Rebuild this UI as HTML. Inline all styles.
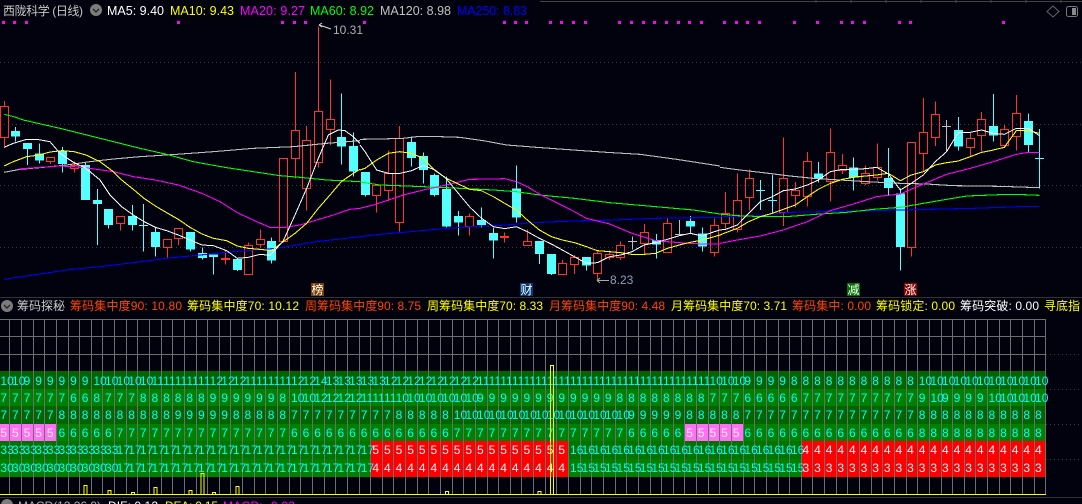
<!DOCTYPE html>
<html><head><meta charset="utf-8"><style>
html,body{margin:0;padding:0;background:#02020e;width:1082px;height:504px;overflow:hidden}
svg{position:absolute;left:0;top:0}
text{font-family:"Liberation Sans","Noto Sans CJK SC",sans-serif;font-size:12px}
.r{position:absolute;left:.4px;width:1082px;display:flex;font:12px/17px "Liberation Sans",sans-serif;color:#0ff}
.r i,.r b{flex:0 0 11.64px;width:11.64px;min-width:0;font-style:normal;font-weight:normal;white-space:nowrap;overflow:visible}
.r b{color:#ffeef4}
.m{font-size:12.5px}
</style></head><body>
<svg width="1082" height="504" viewBox="0 0 1082 504">
<rect width="1082" height="504" fill="#02020e"/>
<path d="M540 1.5H1082M816 0v3M851 0v3M886 0v3M921 0v3M956 0v3M991 0v3M1026 0v3M1061 0v3" stroke="#444" fill="none"/>
<path d="M0 62.5H1082M0 124.5H1082M0 185.5H1082M0 247.5H1082M1046 354.5H1082M1046 389.5H1082M1046 424.5H1082M1046 459.5H1082" stroke="#3c3c3c" stroke-dasharray="1 3" fill="none"/>
<path d="M0 297.5H1082M0 497.5H1082" stroke="#333" fill="none"/>

<!-- header -->
<text x="3" y="15" fill="#c8c8c8" textLength="80">西陇科学 (日线)</text>
<circle cx="96" cy="10" r="6" fill="#7c7c7c"/><path d="M93 9l3 3 3-3" stroke="#222" fill="none" stroke-width="1.3"/>
<text class="m" x="107" y="15" fill="#fff" textLength="57">MA5: 9.40</text>
<text class="m" x="170" y="15" fill="#ff0" textLength="64">MA10: 9.43</text>
<text class="m" x="240" y="15" fill="#f0f" textLength="65">MA20: 9.27</text>
<text class="m" x="310" y="15" fill="#0f0" textLength="64">MA60: 8.92</text>
<text class="m" x="380" y="15" fill="#c0c0c0" textLength="71">MA120: 8.98</text>
<text class="m" x="457" y="15" fill="#00f" textLength="70">MA250: 8.83</text>
<path d="M1053 6l6 5.500-6 5.500-6-5.500z" stroke="#666" fill="none"/>
<rect x="1066.500" y="6.500" width="11" height="10" rx="2" stroke="#777" fill="none"/><rect x="1072" y="8" width="4" height="7" fill="#888"/>

<!-- magenta dots -->
<path fill="#f0f" d="M2 21h3v3h-3zM13 21h3v3h-3zM25 21h3v3h-3zM177 21h3v3h-3zM281 21h3v3h-3zM293 21h3v3h-3zM304 21h3v3h-3zM363 21h3v3h-3zM503 21h3v3h-3zM514 21h3v3h-3zM525 21h3v3h-3zM549 21h3v3h-3zM560 21h3v3h-3zM572 21h3v3h-3zM584 21h3v3h-3zM618 21h3v3h-3zM630 21h3v3h-3zM642 21h3v3h-3zM653 21h3v3h-3zM665 21h3v3h-3zM677 21h3v3h-3zM688 21h3v3h-3zM700 21h3v3h-3zM723 21h3v3h-3zM735 21h3v3h-3zM746 21h3v3h-3zM758 21h3v3h-3zM793 21h3v3h-3zM816 21h3v3h-3zM840 21h3v3h-3zM851 21h3v3h-3zM863 21h3v3h-3zM898 21h3v3h-3zM909 21h3v3h-3zM1002 21h3v3h-3z"/>

<!-- cyan candles -->
<path stroke="#54ffff" fill="none" d="M15.500 127V141.500M27.500 143V165M39.500 143.500V163.500M62.500 147V172.500M85.500 162.500V200M97.500 189V245M108.500 209V228.500M132.500 205V230.500M143.500 204V251.500M155.500 227V256.500M190.500 232V251.500M202.500 247.500V259.500M213.500 254.500V274.500M237.500 259V271M271.500 237.500V263.500M341.500 93.500V164.500M353.500 132.500V176.500M365.500 172V196.500M411.500 136.500V166.500M423.500 152.500V183.500M434.500 173.500V196.500M446.500 176.500V227.500M458.500 211V235.500M481.500 207.500V227.500M493.500 227.500V258.500M516.500 165.500V222.500M539.500 241V264M551.500 254V275M586.500 257V270.500M656.500 234V258.500M690.500 216V233.500M702.500 227.500V251.500M760.500 180V210M772.500 175V214.500M818.500 162V182.500M853.500 157.500V190.500M888.500 148V195M900.500 188.500V270.500M958.500 117V150.500M993.500 94V141.500M1028.500 113.500V152M1039.500 129V188.500M139 225.500h9M756 190.500h9M768 200.500h9M1035 158.500h9"/>
<path fill="#54ffff" d="M11 131h9V136.500h-9zM23 143h9V149h-9zM35 153.500h9V160.500h-9zM58 150.500h9V164h-9zM81 165h9V200h-9zM93 200h9V204h-9zM104 209h9V225h-9zM128 216h9V225h-9zM151 232h9V247h-9zM186 232h9V249.500h-9zM198 253h9V258h-9zM209 254.500h9V257h-9zM233 259h9V270h-9zM267 241h9V260.500h-9zM337 137h9V146.500h-9zM349 146h9V171.500h-9zM361 172h9V195h-9zM407 142h9V158h-9zM419 156h9V170h-9zM430 175h9V195h-9zM442 189h9V226.500h-9zM454 216h9V222.500h-9zM477 220h9V225h-9zM489 233h9V240.500h-9zM512 188.500h9V217.500h-9zM535 241h9V254h-9zM547 254h9V274h-9zM582 257h9V265.500h-9zM652 240h9V244.500h-9zM686 221h9V226.500h-9zM698 233.500h9V246.500h-9zM814 173.500h9V178.500h-9zM849 167.500h9V177.500h-9zM884 178h9V188h-9zM896 193.500h9V247h-9zM954 130h9V146.500h-9zM989 126h9V135.500h-9zM1024 121h9V145h-9z"/>
<!-- gray dojis -->
<path stroke="#c0c0c0" fill="none" d="M632.500 236.500V249.500M628 241.500h9M679.500 220V234.500M675 234.500h9M946.500 120V151.500M942 126.500h9"/>
<!-- red candles -->
<path stroke="#ff3232" fill="none" d="M4.500 101V106.500M.5 106.500h8V137.500h-8zM4.500 137.500V146M46.500 157.500h8V161.500h-8zM50.500 161.500V164M74.500 161.500V165.500M70.500 165.500h8V168.500h-8zM74.500 168.500V172.500M116.500 216.500h8V223.500h-8zM120.500 223.500V230.500M163.500 239.500h8V247.500h-8zM167.500 247.500V257.500M174.500 228.500h8V238.500h-8zM178.500 238.500V245M225.500 250.500V264.500M221.500 258.500h8V259.500h-8zM248.500 242.500V245.500M244.500 245.500h8V274.500h-8zM260.500 229.500V239.500M256.500 239.500h8V244.500h-8zM260.500 244.500V247.500M279.500 158.500h8V241.500h-8zM295.500 72V130.500M291.500 130.500h8V158.500h-8zM295.500 158.500V178.500M306.500 126V140.500M302.500 140.500h8V188.500h-8zM306.500 188.500V210.500M318.500 26.500V111.500M314.500 111.500h8V162.500h-8zM318.500 162.500V167.500M330.500 79.500V119.500M326.500 119.500h8V129.500h-8zM330.500 129.500V145M372.500 185.500h8V195.500h-8zM376.500 195.500V212.500M388.500 150.500V173.500M384.500 173.500h8V190.500h-8zM388.500 190.500V201M399.500 126V138.500M395.500 138.500h8V222.500h-8zM399.500 222.500V231.500M469.500 213.500V216.500M465.500 216.500h8V226.500h-8zM469.500 226.500V235.500M504.500 232.500V242.500M500.500 236.500h8V237.500h-8zM527.500 229.500V241.500M523.500 241.500h8V245.500h-8zM562.500 260V263.500M558.500 263.500h8V274.500h-8zM574.500 255V257.500M570.500 257.500h8V264.500h-8zM574.500 264.500V274M597.500 250V253.500M593.500 253.500h8V273.500h-8zM597.500 273.500V279.500M609.500 250.500V254.500M605.500 254.500h8V257.500h-8zM609.500 257.500V260M620.500 241.500V245.500M616.500 245.500h8V257.500h-8zM620.500 257.500V260M644.500 224V232.500M640.500 232.500h8V243.500h-8zM644.500 243.500V254M667.500 218.500V223.500M663.500 223.500h8V252.500h-8zM714.500 218.500V225.500M710.500 225.500h8V252.500h-8zM714.500 252.500V256.500M725.500 192V213.500M721.500 213.500h8V223.500h-8zM725.500 223.500V229M737.500 173.500V200.500M733.500 200.500h8V229.500h-8zM737.500 229.500V232.500M749.500 169.500V178.500M745.500 178.500h8V197.500h-8zM749.500 197.500V210.500M783.500 137.500V178.500M779.500 178.500h8V212.500h-8zM783.500 212.500V226M795.500 182V190.500M791.500 190.500h8V195.500h-8zM795.500 195.500V207.500M807.500 152V161.500M803.500 161.500h8V196.500h-8zM807.500 196.500V206.500M830.500 128.500V152.500M826.500 152.500h8V181.500h-8zM830.500 181.500V201.500M842.500 154V165.500M838.500 165.500h8V170.500h-8zM842.500 170.500V174M865.500 165.500V173.500M861.500 173.500h8V183.500h-8zM865.500 183.500V185M877.500 143.500V167.500M873.500 167.500h8V177.500h-8zM877.500 177.500V180.500M907.500 142.500h8V247.500h-8zM911.500 247.500V256.500M923.500 98V132.500M919.500 132.500h8V153.500h-8zM923.500 153.500V171.500M935.500 101.500V114.500M931.500 114.500h8V137.500h-8zM935.500 137.500V146M970.500 133V138.500M966.500 138.500h8V147.500h-8zM970.500 147.500V156.500M981.500 112V119.500M977.500 119.500h8V135.500h-8zM981.500 135.500V151.500M1004.500 125V129.500M1000.500 129.500h8V145.500h-8zM1004.500 145.500V148M1016.500 95V113.500M1012.500 113.500h8V136.500h-8zM1016.500 136.500V150.500"/>

<!-- moving averages -->
<g fill="none" stroke-width="3.200" shape-rendering="crispEdges">
<g transform="translate(0,120) scale(.33333)">
<polyline stroke="#00f" points="12,478 100,465 200,450 300,440 400,428 500,415 600,405 700,395 830,385 950,365 1080,350"/>
<polyline stroke="#c0c0c0" points="12,157 60,148 130,142 200,135 270,125 340,117 420,110 530,103 640,95 760,85 880,80 980,70 1080,62"/>
<polyline stroke="#0f0" points="13,-17 45,-9 70,0 180,25 260,45 340,65 420,85 500,103 580,125 680,143 760,155 840,167 900,172 980,180 1080,185"/>
<polyline stroke="#f0f" points="55,147 120,142 180,138 222,140 270,145 340,155 400,170 466,180 535,195 606,220 660,245 712,278 770,305 810,322 850,323 900,315 950,300 1000,285 1050,268 1080,265"/>
<polyline stroke="#ff0" points="12,138 40,125 80,110 118,105 150,96 187,92 222,95 258,105 300,125 340,155 365,180 400,208 432,235 466,258 500,278 535,298 570,322 606,342 640,355 680,362 712,378 745,385 780,388 815,392 850,365 885,340 920,310 955,265 990,225 1024,185 1060,160 1080,148"/>
<polyline stroke="#fff" stroke-width="3" points="12,82 40,70 80,58 110,58 150,65 180,100 222,128 258,145 300,180 330,225 365,260 400,285 432,305 466,322 500,332 535,345 570,360 606,375 640,377 680,392 712,415 745,412 780,403 810,406 830,385 850,362 885,285 920,205 955,115 985,45 1015,30 1035,32 1060,50 1080,70"/>
</g>
<g transform="translate(360,120) scale(.33333)">
<polyline stroke="#00f" points="0,350 60,343 130,337 230,328 330,320 440,315 520,308 640,303 760,300 880,295 1080,292"/>
<polyline stroke="#c0c0c0" points="0,58 60,57 130,55 170,50 240,50 300,52 370,62 440,75 530,82 640,90 740,97 840,103 950,118 1080,138"/>
<polyline stroke="#0f0" points="0,186 60,195 140,198 260,203 400,210 469,215 538,225 643,235 749,248 887,260 1000,270 1080,282"/>
<polyline stroke="#f0f" points="0,265 40,255 85,240 130,225 190,210 259,195 329,178 400,177 434,176 469,185 502,200 538,222 574,240 643,275 679,295 749,312 816,340 887,362 958,368 1027,372 1080,372"/>
<polyline stroke="#ff0" points="0,150 15,145 50,120 85,100 119,95 154,100 190,115 223,150 259,175 295,192 329,208 364,212 400,230 434,250 469,270 502,300 538,330 574,350 607,360 643,368 679,380 712,392 749,395 782,398 816,403 852,403 887,400 922,385 958,375 991,367 1027,360 1063,350 1080,345"/>
<polyline stroke="#fff" stroke-width="3" points="0,75 15,95 50,150 85,160 120,160 155,152 190,136 225,150 258,175 295,220 330,262 365,295 400,320 434,326 469,320 502,335 538,355 574,372 607,390 643,410 679,430 712,428 749,410 782,405 816,395 852,375 887,368 922,358 958,347 991,340 1027,348 1063,335 1080,330"/>
</g>
<g transform="translate(720,120) scale(.33333)">
<polyline stroke="#00f" points="0,290 100,288 210,277 310,275 450,272 630,268 760,265 900,260 958,260"/>
<polyline stroke="#c0c0c0" points="0,142 60,150 130,158 210,168 280,175 360,180 440,185 541,190 620,192 700,197 840,199 958,203"/>
<polyline stroke="#0f0" points="0,282 50,287 105,289 210,289 300,282 380,277 460,268 541,262 610,250 680,238 741,228 840,224 910,224 958,226"/>
<polyline stroke="#f0f" points="0,370 52,360 121,348 190,330 262,305 331,272 400,252 470,230 541,222 610,192 680,163 751,145 820,125 889,103 925,97 958,97"/>
<polyline stroke="#ff0" points="0,345 17,338 52,325 86,305 121,290 157,280 190,268 226,255 262,230 295,208 331,190 367,178 400,172 436,168 470,165 505,160 541,182 574,165 610,155 646,135 680,128 715,123 751,110 785,97 820,90 853,82 889,32 925,32 958,40"/>
<polyline stroke="#fff" stroke-width="3" points="0,330 17,328 52,315 86,280 121,245 157,230 190,212 226,207 262,195 295,180 331,155 367,148 400,148 436,146 470,142 505,162 541,210 574,190 610,165 646,125 680,95 715,37 751,37 785,30 820,40 853,43 889,25 925,25 958,47"/>
</g>
</g>

<!-- price labels -->
<path d="M331 29l-12-4m0 0l3-2m-3 2l3 2" stroke="#ddd" fill="none"/>
<text x="333" y="34" fill="#b0b0b0" font-size="12">10.31</text>
<path d="M609 280.500H597m0 0l3-2.500m-3 2.500l3 2.500" stroke="#aaa" fill="none"/>
<text x="610" y="284" fill="#8fa0b4">8.23</text>

<!-- chips -->
<rect x="311" y="283" width="13" height="13" fill="#7a3f00"/><text x="311.500" y="294" fill="#fff">榜</text>
<rect x="520" y="283" width="13" height="13" fill="#003a78"/><text x="520.500" y="294" fill="#fff">财</text>
<rect x="847" y="283" width="13" height="13" fill="#007000"/><text x="847.500" y="294" fill="#fff">减</text>
<rect x="904" y="283" width="13" height="13" fill="#8b0000"/><text x="904.500" y="294" fill="#fff">涨</text>

<!-- indicator title -->
<circle cx="7" cy="306" r="6" fill="#7c7c7c"/><path d="M4 305l3 3 3-3" stroke="#222" fill="none" stroke-width="1.300"/>
<text x="17" y="310" fill="#c8c8c8" textLength="48">筹码探秘</text>
<text x="70" y="310" fill="#ff4500" textLength="112">筹码集中度90: 10.80</text>
<text x="187" y="310" fill="#ff0" textLength="112">筹码集中度70: 10.12</text>
<text x="305" y="310" fill="#ff4500" textLength="116">周筹码集中度90: 8.75</text>
<text x="427" y="310" fill="#ff0" textLength="116">周筹码集中度70: 8.33</text>
<text x="549" y="310" fill="#ff4500" textLength="116">月筹码集中度90: 4.48</text>
<text x="671" y="310" fill="#ff0" textLength="116">月筹码集中度70: 3.71</text>
<text x="792" y="310" fill="#ff4500" textLength="79">筹码集中: 0.00</text>
<text x="876" y="310" fill="#ff0" textLength="79">筹码锁定: 0.00</text>
<text x="960" y="310" fill="#fff" textLength="79">筹码突破: 0.00</text>
<text x="1044" y="310" fill="#ff0">寻底指</text>

<!-- bands -->
<rect x="0" y="371" width="1046" height="18" fill="#006400"/>
<rect x="0" y="389" width="1046" height="17" fill="#008000"/>
<rect x="0" y="406" width="1046" height="18" fill="#006400"/>
<rect x="0" y="424" width="1046" height="17" fill="#008000"/>
<rect x="0" y="441" width="1046" height="18" fill="#007400"/>
<rect x="0" y="459" width="1046" height="18" fill="#008000"/>
<path fill="#ff70f4" d="M0 424h56v17H0zM685 424h58v17h-58z"/>
<path fill="#f00" d="M371 441h197v36H371zM801 441h245v36H801z"/>

<!-- grid -->
<path stroke="#6e6e6e" fill="none" d="M0 319.500H1046M0 336.500H1046M0 354.500H1046M9.500 319v175M21.500 319v175M33.500 319v175M44.500 319v175M56.500 319v175M68.500 319v175M79.500 319v175M91.500 319v175M102.500 319v175M114.500 319v175M126.500 319v175M137.500 319v175M149.500 319v175M161.500 319v175M172.500 319v175M184.500 319v175M196.500 319v175M207.500 319v175M219.500 319v175M230.500 319v175M242.500 319v175M254.500 319v175M265.500 319v175M277.500 319v175M289.500 319v175M300.500 319v175M312.500 319v175M324.500 319v175M335.500 319v175M347.500 319v175M359.500 319v175M370.500 319v175M382.500 319v175M393.500 319v175M405.500 319v175M417.500 319v175M428.500 319v175M440.500 319v175M452.500 319v175M463.500 319v175M475.500 319v175M487.500 319v175M498.500 319v175M510.500 319v175M521.500 319v175M533.500 319v175M545.500 319v175M556.500 319v175M568.500 319v175M580.500 319v175M591.500 319v175M603.500 319v175M615.500 319v175M626.500 319v175M638.500 319v175M650.500 319v175M661.500 319v175M673.500 319v175M684.500 319v175M696.500 319v175M708.500 319v175M719.500 319v175M731.500 319v175M743.500 319v175M754.500 319v175M766.500 319v175M778.500 319v175M789.500 319v175M801.500 319v175M812.500 319v175M824.500 319v175M836.500 319v175M847.500 319v175M859.500 319v175M871.500 319v175M882.500 319v175M894.500 319v175M906.500 319v175M917.500 319v175M929.500 319v175M941.500 319v175M952.500 319v175M964.500 319v175M975.500 319v175M987.500 319v175M999.500 319v175M1010.500 319v175M1022.500 319v175M1034.500 319v175M1045.500 319v175"/>

<!-- bottom -->
<circle cx="7" cy="505" r="6" fill="#7c7c7c"/>
<text x="18" y="510" fill="#b0b0b0" textLength="83">MACD(12,26,9)</text>
<text x="108" y="510" fill="#fff" textLength="50">DIF: 0.12</text>
<text x="165" y="510" fill="#ff0" textLength="53">DEA: 0.15</text>
<text x="223" y="510" fill="#f0f" textLength="72">MACD: -0.03</text>
</svg>

<div class="r" style="top:372.500px"><i>10</i><i>10</i><i>9</i><i>9</i><i>9</i><i>9</i><i>9</i><i>9</i><i>10</i><i>10</i><i>10</i><i>10</i><i>10</i><i>11</i><i>11</i><i>11</i><i>11</i><i>11</i><i>12</i><i>12</i><i>12</i><i>11</i><i>11</i><i>11</i><i>11</i><i>12</i><i>12</i><i>14</i><i>13</i><i>13</i><i>13</i><i>13</i><i>13</i><i>12</i><i>12</i><i>12</i><i>12</i><i>12</i><i>12</i><i>12</i><i>12</i><i>11</i><i>11</i><i>11</i><i>11</i><i>11</i><i>11</i><i>11</i><i>11</i><i>11</i><i>11</i><i>11</i><i>11</i><i>11</i><i>11</i><i>11</i><i>11</i><i>11</i><i>11</i><i>11</i><i>11</i><i>10</i><i>10</i><i>10</i><i>9</i><i>9</i><i>9</i><i>9</i><i>8</i><i>8</i><i>8</i><i>8</i><i>8</i><i>8</i><i>8</i><i>8</i><i>8</i><i>8</i><i>8</i><i>10</i><i>10</i><i>10</i><i>10</i><i>10</i><i>10</i><i>10</i><i>10</i><i>10</i><i>10</i><i>10</i></div>
<div class="r" style="top:389.900px"><i>7</i><i>7</i><i>7</i><i>7</i><i>7</i><i>7</i><i>6</i><i>6</i><i>8</i><i>7</i><i>7</i><i>7</i><i>8</i><i>8</i><i>8</i><i>8</i><i>8</i><i>8</i><i>9</i><i>9</i><i>9</i><i>9</i><i>9</i><i>9</i><i>8</i><i>10</i><i>10</i><i>12</i><i>12</i><i>12</i><i>12</i><i>11</i><i>11</i><i>11</i><i>10</i><i>10</i><i>10</i><i>10</i><i>10</i><i>10</i><i>10</i><i>9</i><i>9</i><i>9</i><i>9</i><i>9</i><i>9</i><i>9</i><i>9</i><i>9</i><i>9</i><i>9</i><i>9</i><i>8</i><i>8</i><i>8</i><i>8</i><i>8</i><i>8</i><i>8</i><i>8</i><i>7</i><i>7</i><i>7</i><i>6</i><i>6</i><i>6</i><i>6</i><i>6</i><i>7</i><i>7</i><i>7</i><i>7</i><i>7</i><i>7</i><i>7</i><i>7</i><i>7</i><i>7</i><i>9</i><i>10</i><i>9</i><i>9</i><i>9</i><i>9</i><i>10</i><i>10</i><i>10</i><i>10</i><i>10</i></div>
<div class="r" style="top:407.300px"><i>7</i><i>7</i><i>7</i><i>7</i><i>7</i><i>8</i><i>8</i><i>8</i><i>8</i><i>8</i><i>8</i><i>8</i><i>8</i><i>8</i><i>8</i><i>9</i><i>9</i><i>9</i><i>9</i><i>9</i><i>8</i><i>8</i><i>8</i><i>8</i><i>8</i><i>7</i><i>7</i><i>7</i><i>7</i><i>7</i><i>7</i><i>7</i><i>7</i><i>7</i><i>8</i><i>8</i><i>8</i><i>8</i><i>8</i><i>10</i><i>10</i><i>10</i><i>10</i><i>10</i><i>10</i><i>10</i><i>10</i><i>10</i><i>10</i><i>10</i><i>10</i><i>10</i><i>10</i><i>10</i><i>9</i><i>9</i><i>9</i><i>9</i><i>9</i><i>8</i><i>8</i><i>8</i><i>8</i><i>8</i><i>7</i><i>7</i><i>7</i><i>7</i><i>7</i><i>7</i><i>7</i><i>7</i><i>7</i><i>7</i><i>7</i><i>7</i><i>7</i><i>7</i><i>7</i><i>8</i><i>8</i><i>8</i><i>8</i><i>8</i><i>8</i><i>8</i><i>8</i><i>8</i><i>8</i><i>8</i></div>
<div class="r" style="top:424.700px"><b>5</b><b>5</b><b>5</b><b>5</b><b>5</b><i>6</i><i>6</i><i>6</i><i>6</i><i>6</i><i>7</i><i>7</i><i>7</i><i>7</i><i>7</i><i>7</i><i>7</i><i>7</i><i>7</i><i>7</i><i>7</i><i>7</i><i>7</i><i>7</i><i>7</i><i>6</i><i>6</i><i>6</i><i>6</i><i>6</i><i>6</i><i>6</i><i>6</i><i>6</i><i>6</i><i>6</i><i>6</i><i>6</i><i>6</i><i>7</i><i>7</i><i>7</i><i>7</i><i>7</i><i>7</i><i>7</i><i>7</i><i>7</i><i>7</i><i>7</i><i>7</i><i>7</i><i>7</i><i>7</i><i>6</i><i>6</i><i>6</i><i>6</i><i>6</i><b>5</b><b>5</b><b>5</b><b>5</b><b>5</b><i>6</i><i>6</i><i>6</i><i>6</i><i>6</i><i>6</i><i>6</i><i>6</i><i>6</i><i>6</i><i>6</i><i>6</i><i>6</i><i>6</i><i>6</i><i>8</i><i>8</i><i>8</i><i>8</i><i>8</i><i>8</i><i>8</i><i>8</i><i>8</i><i>8</i><i>8</i></div>
<div class="r" style="top:442.100px"><i>33</i><i>33</i><i>33</i><i>33</i><i>33</i><i>33</i><i>33</i><i>33</i><i>33</i><i>33</i><i>17</i><i>17</i><i>17</i><i>17</i><i>17</i><i>17</i><i>17</i><i>17</i><i>17</i><i>17</i><i>17</i><i>17</i><i>17</i><i>17</i><i>17</i><i>17</i><i>17</i><i>17</i><i>17</i><i>17</i><i>17</i><i>17</i><b>5</b><b>5</b><b>5</b><b>5</b><b>5</b><b>5</b><b>5</b><b>5</b><b>5</b><b>5</b><b>5</b><b>5</b><b>5</b><b>5</b><b>5</b><b>5</b><b>5</b><i>16</i><i>16</i><i>16</i><i>16</i><i>16</i><i>16</i><i>16</i><i>16</i><i>16</i><i>16</i><i>16</i><i>16</i><i>16</i><i>16</i><i>16</i><i>16</i><i>16</i><i>16</i><i>16</i><i>16</i><b>4</b><b>4</b><b>4</b><b>4</b><b>4</b><b>4</b><b>4</b><b>4</b><b>4</b><b>4</b><b>4</b><b>4</b><b>4</b><b>4</b><b>4</b><b>4</b><b>4</b><b>4</b><b>4</b><b>4</b><b>4</b></div>
<div class="r" style="top:459.500px"><i>30</i><i>30</i><i>30</i><i>30</i><i>30</i><i>30</i><i>30</i><i>30</i><i>30</i><i>30</i><i>17</i><i>17</i><i>17</i><i>17</i><i>17</i><i>17</i><i>17</i><i>17</i><i>17</i><i>17</i><i>17</i><i>17</i><i>17</i><i>17</i><i>17</i><i>17</i><i>17</i><i>17</i><i>17</i><i>17</i><i>17</i><i>17</i><b>4</b><b>4</b><b>4</b><b>4</b><b>4</b><b>4</b><b>4</b><b>4</b><b>4</b><b>4</b><b>4</b><b>4</b><b>4</b><b>4</b><b>4</b><b>4</b><b>4</b><i>15</i><i>15</i><i>15</i><i>15</i><i>15</i><i>15</i><i>15</i><i>15</i><i>15</i><i>15</i><i>15</i><i>15</i><i>15</i><i>15</i><i>15</i><i>15</i><i>15</i><i>15</i><i>15</i><i>15</i><b>3</b><b>3</b><b>3</b><b>3</b><b>3</b><b>3</b><b>3</b><b>3</b><b>3</b><b>3</b><b>3</b><b>3</b><b>3</b><b>3</b><b>3</b><b>3</b><b>3</b><b>3</b><b>3</b><b>3</b><b>3</b></div>

<svg width="1082" height="504" viewBox="0 0 1082 504">
<path d="M0 494.500H1046" stroke="#ff0" fill="none"/>
<path stroke="#ff0" fill="none" d="M84 485.500h3v9h-3zM108 490.500h3v4h-3zM131.500 492.500h3v2h-3zM154 487.500h3v7h-3zM189 490.500h3v4h-3zM201 473.500h3v21h-3zM212.500 492.500h3v2h-3zM236 486.500h3v8h-3zM445.500 491.500h3v3h-3zM538 491.500h3v3h-3z"/>
<rect x="550.500" y="365.500" width="3" height="129" stroke="#ff0" fill="none"/>
</svg>
</body></html>
